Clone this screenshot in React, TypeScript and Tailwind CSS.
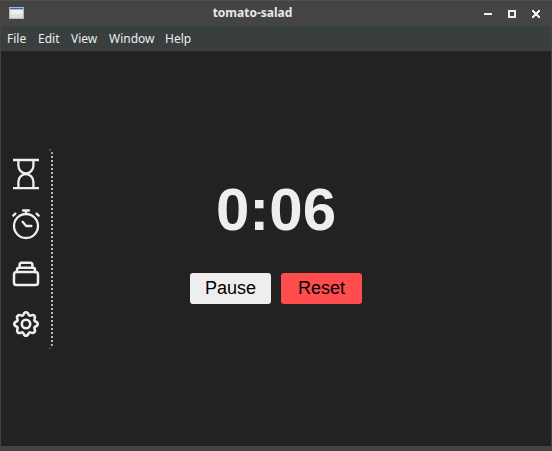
import type { ReactNode } from "react";

const menus = [
  { label: "File", width: "w-[31px]" },
  { label: "Edit", width: "w-[33px]" },
  { label: "View", width: "w-[38px]" },
  { label: "Window", width: "w-[56px]" },
  { label: "Help", width: "w-[40px]" },
];

function SideButton({ label, children }: { label: string; children: ReactNode }) {
  return (
    <button aria-label={label} className="flex h-[50px] w-[50px] items-center justify-center">
      <svg viewBox="0 0 32 32" className="h-8 w-8" fill="none" stroke="#eeeeee" strokeWidth="2.3" strokeLinecap="round" strokeLinejoin="round">
        {children}
      </svg>
    </button>
  );
}

function TitleBar() {
  return (
    <header className="flex h-[26px] shrink-0 items-center border-t border-[#505050] bg-[#444444] pr-[11px] pb-px pl-[8px]">
      <svg viewBox="0 0 15 12" className="h-[12px] w-[15px]" shapeRendering="crispEdges">
        <rect width="15" height="12" fill="#b4b6b2" />
        <rect x="1" y="1" width="13" height="10" fill="#eeeeec" />
        <rect x="1" y="7" width="13" height="4" fill="#dedfdb" />
        <rect x="1" y="1" width="13" height="1" fill="#3465a4" />
        <rect x="1" y="2" width="13" height="1" fill="#a5bddb" />
      </svg>
      <h1 className="-mr-[43px] flex-1 pr-[44px] text-center text-[12px] leading-[22px] font-bold text-[#e8e8e8]">tomato-salad</h1>
      <svg viewBox="0 0 58 10" className="mt-px h-[10px] w-[58px]" shapeRendering="crispEdges" fill="#eeeeee">
        <rect x="2" y="4" width="8" height="2" />
        <path fillRule="evenodd" d="M26 1h8v8h-8zM28 3v4h4V3z" />
        <path d="M50 1h2v1h1v1h2V2h1V1h2v2h-1v1h-1v2h1v1h1v2h-2V8h-1V7h-2v1h-1v1h-2V7h1V6h1V4h-1V3h-1z" />
      </svg>
    </header>
  );
}

export default function App() {
  return (
    <div className="flex h-[451px] w-[552px] flex-col border-x border-[#444444] bg-[#222222] font-['Noto_Sans',sans-serif]">
      <TitleBar />
      <nav className="flex h-[25px] shrink-0 bg-[#393f3f] pl-[6px] text-[12px] leading-[25px] text-[#eeeeee]">
        {menus.map(({ label, width }) => (
          <span key={label} className={`${width} shrink-0 whitespace-nowrap`}>{label}</span>
        ))}
      </nav>
      <main className="flex min-h-0 flex-1 items-center">
        <aside className="flex h-[200px] w-[52px] flex-col rounded-r-[5px] border-r-2 border-dotted border-[#bbbbbb]">
          <SideButton label="Hourglass">
            <path strokeLinecap="butt" d="M3 2h26M3 30.2h26" />
            <path d="M8.4 2.5v5.3a7.5 7.5 0 0 0 15 0V2.5M8.4 29.5v-5.8a7.5 7.5 0 0 1 15 0v5.8" />
          </SideButton>
          <SideButton label="Timer">
            <circle cx="16" cy="18" r="12" />
            <path d="M13 2.5h6M16 3v3M3.3 7.6l2.1-2M28.7 7.6l-2.1-2M12.6 13.8l3.6 4.2h5.2" />
          </SideButton>
          <SideButton label="Sessions">
            <rect x="4" y="14" width="24" height="13" rx="2.6" strokeWidth="2.5" />
            <path strokeWidth="2.5" d="M7 14v-2q0-2.2 2.2-2.2h13.6Q25 9.8 25 12v2M9.6 9.7V7.1q0-2.4 2-2.4h8.8q2 0 2 2.4v2.6" />
          </SideButton>
          <SideButton label="Settings">
            <circle cx="16" cy="16" r="4.2" strokeWidth="2.6" />
            <path strokeWidth="2.6" d="M13.5 6.5Q14.2 4.3 16 4.3t2.5 2.2q.7 1.7 2.5.9 2.2-1 3.3.3t.3 3.3q-.8 1.8.9 2.5 2.2.7 2.2 2.5t-2.2 2.5q-1.7.7-.9 2.5 1 2.2-.3 3.3t-3.3.3q-1.8-.8-2.5.9-.7 2.2-2.5 2.2t-2.5-2.2q-.7-1.7-2.5-.9-2.2 1-3.3-.3t-.3-3.3q.8-1.8-.9-2.5Q4.3 17.8 4.3 16t2.2-2.5q1.7-.7.9-2.5-1-2.2.3-3.3t3.3-.3q1.8.8 2.5-.9z" />
          </SideButton>
        </aside>
        <section className="flex flex-1 flex-col items-center pr-[52px] pb-[19px] font-['Liberation_Sans',Arial,sans-serif]">
          <div className="text-[60px] leading-[69px] font-bold text-[#eeeeee]">0:06</div>
          <div className="mt-[29px] flex gap-[10px] text-[18px] text-black">
            <button className="h-[31px] w-[81px] rounded-[3px] bg-[#eeeeee]">Pause</button>
            <button className="h-[31px] w-[81px] rounded-[3px] bg-[#ff4d4d]">Reset</button>
          </div>
        </section>
      </main>
      <footer className="h-[5px] shrink-0 bg-[#444444]" />
    </div>
  );
}
